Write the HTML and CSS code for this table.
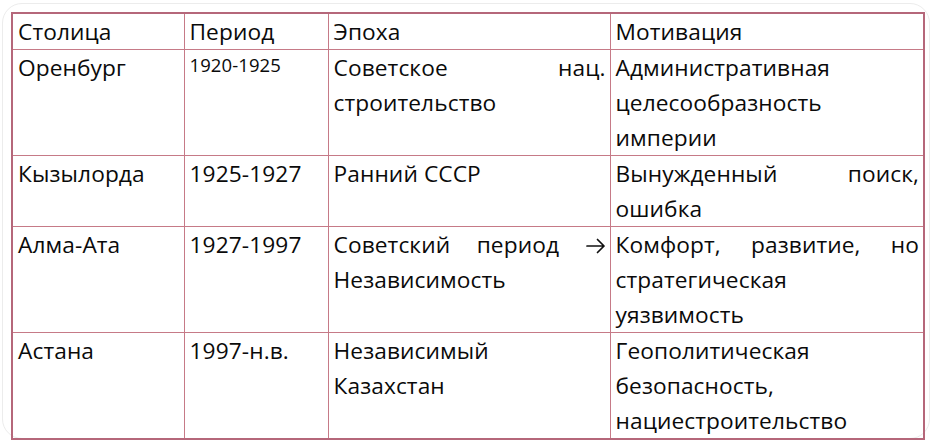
FILE: index.html
```html
<!DOCTYPE html>
<html lang="ru">
<head>
<meta charset="utf-8">
<title>Столицы</title>
<link rel="stylesheet" href="styles.css">
</head>
<body>
<div class="frame">
  <table class="capitals">
    <colgroup>
      <col class="c1"><col class="c2"><col class="c3"><col class="c4">
    </colgroup>
    <thead>
      <tr class="head">
        <th>Столица</th>
        <th>Период</th>
        <th>Эпоха</th>
        <th>Мотивация</th>
      </tr>
    </thead>
    <tbody>
      <tr>
        <td>Оренбург</td>
        <td><span class="small">1920-1925</span></td>
        <td><span class="jl">Советское нац.</span><span class="ln">строительство</span></td>
        <td><span class="ln">Административная</span><span class="ln">целесообразность</span><span class="ln">империи</span></td>
      </tr>
      <tr>
        <td>Кызылорда</td>
        <td>1925-1927</td>
        <td><span class="ln">Ранний СССР</span></td>
        <td><span class="jl">Вынужденный поиск,</span><span class="ln">ошибка</span></td>
      </tr>
      <tr>
        <td>Алма-Ата</td>
        <td>1927-1997</td>
        <td><span class="jl">Советский период <svg class="arrow" viewBox="0 0 20 16" width="20" height="16" aria-label="→"><path d="M1 8 H18 M11.5 1.5 L18 8 L11.5 14.5" fill="none" stroke="#111" stroke-width="1.7" stroke-linecap="round" stroke-linejoin="round"/></svg></span><span class="ln">Независимость</span></td>
        <td><span class="jl">Комфорт, развитие, но</span><span class="ln">стратегическая</span><span class="ln">уязвимость</span></td>
      </tr>
      <tr>
        <td>Астана</td>
        <td>1997-н.в.</td>
        <td><span class="ln">Независимый</span><span class="ln">Казахстан</span></td>
        <td><span class="ln">Геополитическая</span><span class="ln">безопасность,</span><span class="ln">нациестроительство</span></td>
      </tr>
    </tbody>
  </table>
</div>
</body>
</html>
```
FILE: styles.css
```css
html, body {
  margin: 0;
  padding: 0;
  background: #ffffff;
}
body {
  width: 931px;
  height: 445px;
  overflow: hidden;
  font-family: "Open Sans", "Noto Sans", sans-serif;
  color: #0a0a0a;
}
.frame {
  margin: 3px 1px 0 2px;
  height: 436px;
  border: 1px solid #ececec;
  border-radius: 20px;
  padding: 8px 0 0 8px;
  box-sizing: border-box;
}
.capitals {
  border-collapse: collapse;
  table-layout: fixed;
  width: 913px;
  border: 2px solid #b5677a;
}
.c1 { width: 172px; }
.c2 { width: 144px; }
.c3 { width: 282px; }
.c4 { width: 314px; }
.capitals th,
.capitals td {
  border: 1px solid #c67a87;
  padding: 0 4px 0 5px;
  vertical-align: top;
  text-align: left;
  font-weight: 400;
  font-size: 22.7px;
  line-height: 35px;
  letter-spacing: 0.1px;
}
.capitals th:first-child,
.capitals td:first-child { border-left: 2px solid #b5677a; }
.capitals th:last-child,
.capitals td:last-child { border-right: 2px solid #b5677a; }
.ln { display: block; }
.jl {
  display: block;
  text-align: justify;
  text-align-last: justify;
}
.arrow {
  display: inline-block;
  vertical-align: -1px;
}
.small {
  display: block;
  font-size: 18.5px;
  line-height: 29px;
}
```
